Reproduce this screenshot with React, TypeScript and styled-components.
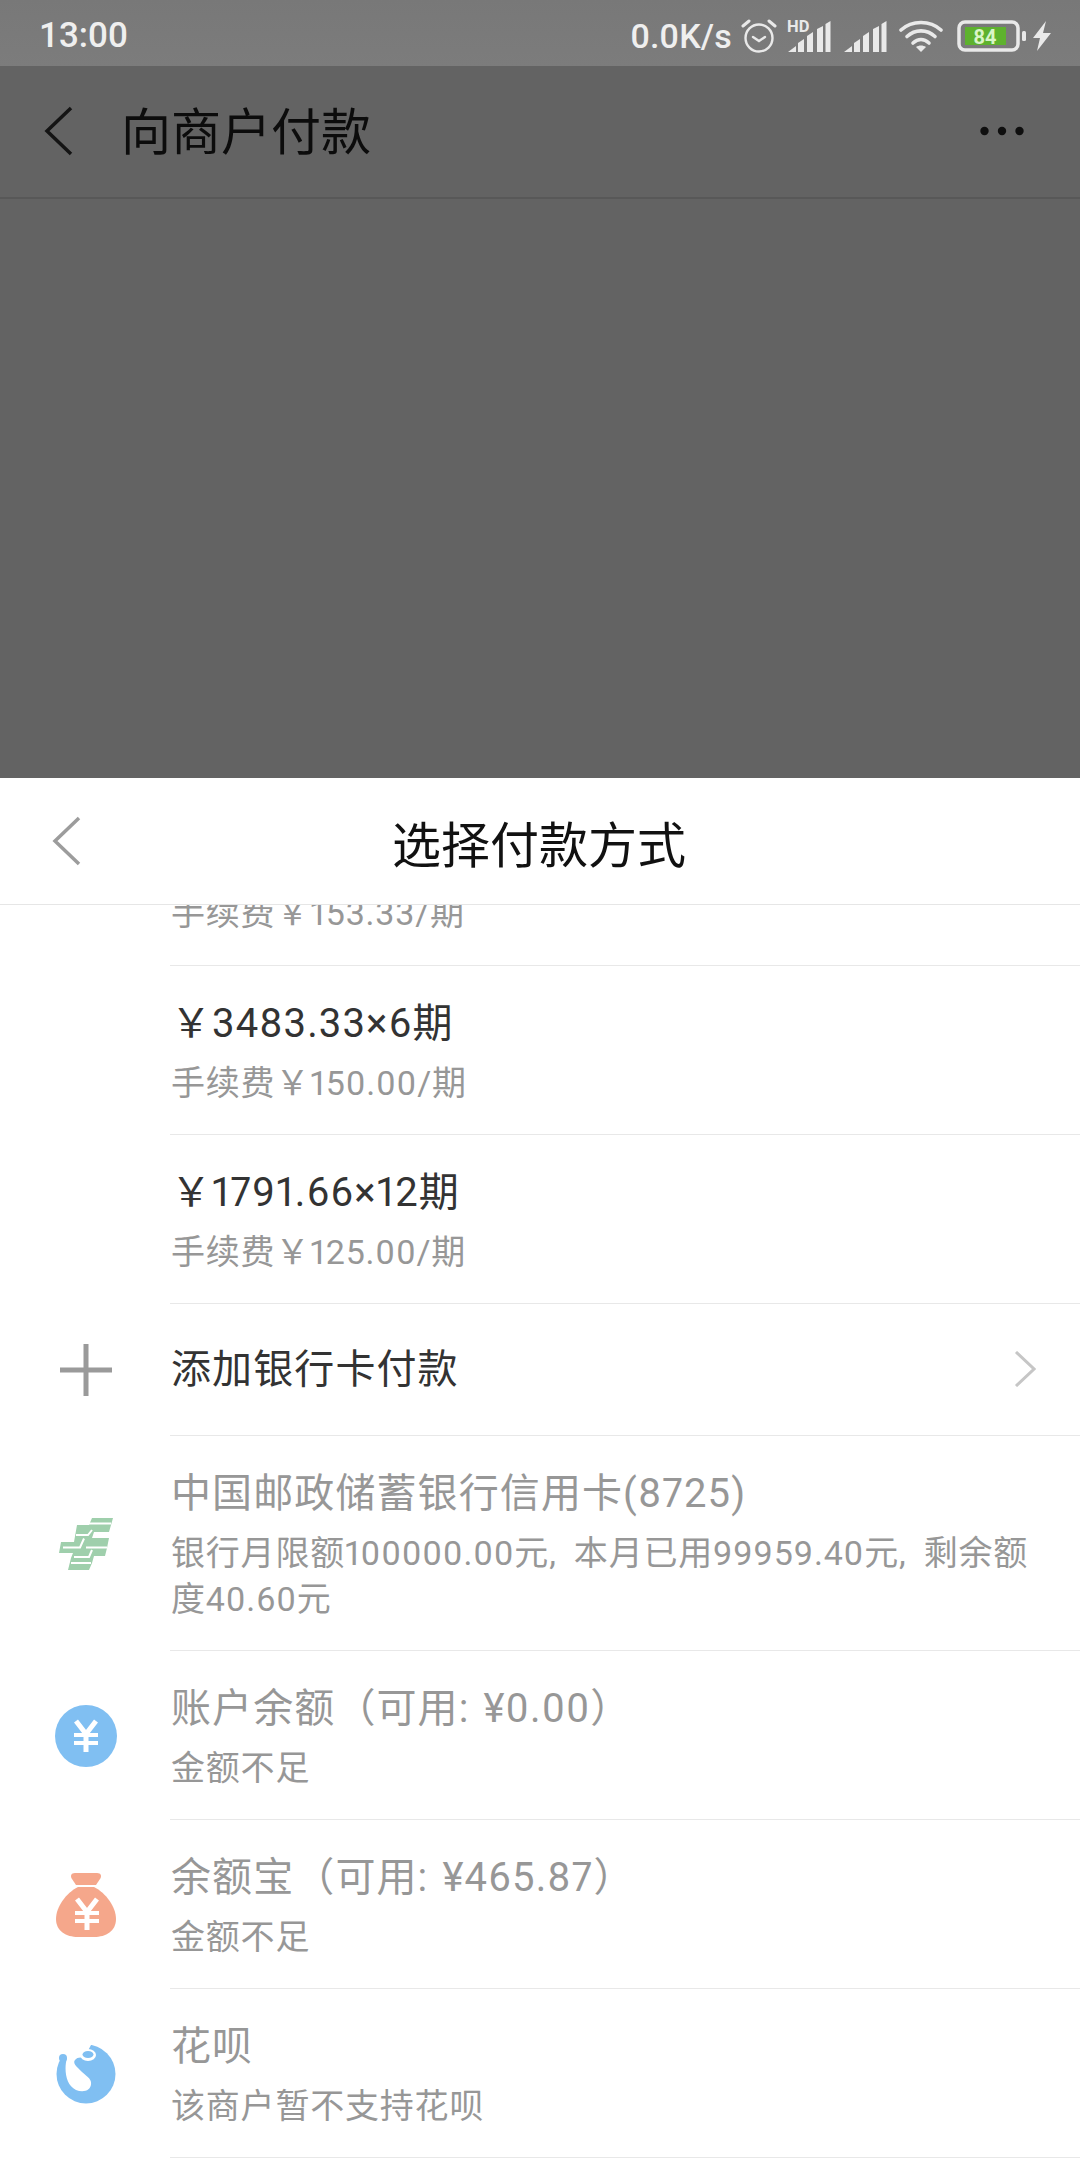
import React from "react";
import { createGlobalStyle, styled } from "styled-components";

const GlobalStyle = createGlobalStyle`
  html, body {
    margin: 0;
    padding: 0;
    background: #fff;
  }
  * {
    box-sizing: border-box;
  }
`;

const FONT = `Roboto, "Noto Sans CJK SC", "Noto Sans", sans-serif`;

const Page = styled.div`
  width: 1080px;
  height: 2160px;
  display: flex;
  flex-direction: column;
  overflow: hidden;
  font-family: ${FONT};
`;
const StatusBar = styled.div`
  height: 66px;
  flex: none;
  background: linear-gradient(#787878, #7c7c7c);
  display: flex;
  align-items: center;
  justify-content: space-between;
  padding: 5px 28px 0 39px;
  color: #efefef;
  font-weight: 500;
`;
const Clock = styled.span`
  font-size: 35px;
`;
const StatusIcons = styled.div`
  display: flex;
  align-items: center;
`;
const Speed = styled.span`
  font-size: 34px;
  letter-spacing: 0.2px;
`;
const Gap = styled.span<{ $w: number }>`
  width: ${(p) => p.$w}px;
  flex: none;
`;
const AppBar = styled.div`
  height: 133px;
  flex: none;
  background: #636363;
  border-bottom: 2px solid #585858;
  display: flex;
  align-items: center;
  padding: 0 56px 2px 44px;
`;
const AppTitle = styled.div`
  font-size: 50px;
  color: #0c0c0c;
  margin-left: 47px;
  padding-bottom: 6px;
  flex: 1;
`;
const Dimmed = styled.div`
  flex: none;
  height: 579px;
  background: #636363;
`;
const Sheet = styled.div`
  flex: 1;
  min-height: 0;
  background: #fff;
  display: flex;
  flex-direction: column;
`;
const SheetHeader = styled.div`
  height: 127px;
  flex: none;
  border-bottom: 1px solid #e6e6e6;
  display: grid;
  grid-template-columns: 1fr auto 1fr;
  align-items: center;
`;
const BackSlot = styled.div`
  display: flex;
  padding-left: 52px;
`;
const SheetTitle = styled.div`
  font-size: 49px;
  color: #111;
  margin-left: -2px;
`;
const List = styled.div`
  flex: 1;
  min-height: 0;
  overflow: hidden;
`;
const Row = styled.div`
  display: flex;
`;
const IconSlot = styled.div`
  width: 170px;
  flex: none;
  display: flex;
  align-items: center;
  justify-content: center;
  padding-left: 2px;
`;
const Body = styled.div<{ $variant?: "compact" | "clipped" }>`
  flex: 1;
  min-width: 0;
  border-bottom: 1px solid #e8e8e8;
  padding: ${(p) =>
    p.$variant === "compact"
      ? "39px 44px 38px 1px"
      : p.$variant === "clipped"
        ? "0 44px 29px 1px"
        : "31px 44px 28px 1px"};
  display: flex;
  flex-direction: column;
  position: relative;
`;
const Title = styled.div<{ $muted?: boolean }>`
  font-size: 40px;
  line-height: 54px;
  white-space: nowrap;
  color: ${(p) => (p.$muted ? "#979797" : "#333")};
  letter-spacing: 1.1px;
  word-spacing: 3px;
  font-variant-numeric: proportional-nums;
`;
const Sub = styled.div<{ $clipped?: boolean }>`
  margin-top: ${(p) => (p.$clipped ? "-15px" : "9px")};
  font-size: 34px;
  line-height: 46px;
  color: #979797;
  letter-spacing: 0.8px;
  word-spacing: 8px;
  font-variant-numeric: proportional-nums;
`;
const Arrow = styled.svg`
  position: absolute;
  right: 44px;
  top: 47px;
`;

const Alarm = () => (
  <svg width="36" height="36" viewBox="0 0 36 36" fill="none" stroke="#e9e9e9" strokeWidth="2.4" strokeLinecap="round">
    <circle cx="18" cy="20" r="13.5" />
    <path d="M12 19l6 4 6-4" />
    <path d="M2 8l6-5M34 8l-6-5" strokeWidth="3" />
  </svg>
);
const Signal = ({ hd }: { hd?: boolean }) => (
  <svg width="44" height="34" viewBox="0 0 44 34" fill="#e9e9e9">
    <path d="M1 33l8-6v6zM11 33v-9l6-4v13zM20 33V17l6-4v20zM30 33V10l6-3v26zM38.500 33V5l5-3v31z" />
    {hd && (
      <text x="0" y="13" fontSize="16.500" fontWeight="700" fontFamily="Roboto, sans-serif">
        HD
      </text>
    )}
  </svg>
);
const Wifi = () => (
  <svg width="44" height="34" viewBox="0 0 44 34" fill="none" stroke="#e9e9e9" strokeWidth="3.600" strokeLinecap="round">
    <path d="M2 11C13 1 31 1 42 11" />
    <path d="M8 17.500C16 10 28 10 36 17.500" />
    <path d="M14 24C19 19.500 25 19.500 30 24" />
    <path d="M22 33l-5-5c3-2 7-2 10 0z" fill="#e9e9e9" stroke="none" />
  </svg>
);
const Battery = () => (
  <svg width="70" height="34" viewBox="0 0 70 34">
    <rect x="2" y="3" width="59" height="28" rx="6" fill="none" stroke="#e9e9e9" strokeWidth="3.500" />
    <rect x="8" y="8" width="41" height="18" fill="#5eb22e" />
    <rect x="65" y="12" width="4" height="10" rx="1.500" fill="#e9e9e9" />
    <text x="28" y="24.500" textAnchor="middle" fontSize="20" fontWeight="700" fill="#d9f5c8" fontFamily="Roboto, sans-serif">
      84
    </text>
  </svg>
);
const Bolt = () => (
  <svg width="20" height="30" viewBox="0 0 20 30" fill="#e9e9e9">
    <path d="M14 0L1 17h7l-3 13 14-18h-8z" />
  </svg>
);
const Back = ({ color }: { color: string }) => (
  <svg width="30" height="50" viewBox="0 0 30 50" fill="none" stroke={color} strokeWidth="3.500">
    <path d="M27 2L3 25l24 23" />
  </svg>
);
const Dots = () => (
  <svg width="44" height="10" viewBox="0 0 44 10" fill="#0f0f0f">
    <circle cx="4.500" cy="5" r="4.200" />
    <circle cx="22" cy="5" r="4.200" />
    <circle cx="39.500" cy="5" r="4.200" />
  </svg>
);
const Plus = () => (
  <svg width="52" height="52" viewBox="0 0 52 52" fill="#9a9a9a">
    <path d="M23.500 0h5v23.500H52v5H28.500V52h-5V28.500H0v-5h23.500z" />
  </svg>
);
const PostLogo = () => (
  <svg width="54" height="52" viewBox="0 0 54 52">
    <path
      d="M54 0H33l-3 7H18l-3 17H2L0 35h14l-2 5-3 12h21l3-7 2-7h11l2-8 2-10H33l2-6h15l2-7z"
      fill="#9fcfac"
    />
    <path
      d="M30 5.500h22M17 17h12l4-5M4 29.500h17l4-9M27 29.500h21M12 45h20M15 39h15l3-7"
      fill="none"
      stroke="#fff"
      strokeWidth="2"
    />
  </svg>
);
const YenMark = ({ x, y }: { x: number; y: number }) => (
  <path
    transform={`translate(${x} ${y})`}
    d="M-10 -15l10 13 10 -13"
    fill="none"
    stroke="#fff"
    strokeWidth="5"
  />
);
const YenBars = ({ x, y }: { x: number; y: number }) => (
  <path
    transform={`translate(${x} ${y})`}
    d="M-12 -1h24v4h-24zM-12 7h24v4h-24zM-2.500 -2h5v20h-5z"
    fill="#fff"
  />
);
const Balance = () => (
  <svg width="62" height="62" viewBox="0 0 62 62">
    <circle cx="31" cy="31" r="31" fill="#80bff2" />
    <YenMark x={31} y={31} />
    <YenBars x={31} y={29} />
  </svg>
);
const MoneyBag = () => (
  <svg width="60" height="64" viewBox="0 0 60 64">
    <path d="M19 0h22c4 0 5 3 3 6l-4 6H20l-4-6c-2-3-1-6 3-6z" fill="#f5a78b" />
    <path d="M22 14h16c12 6 22 20 22 32 0 12-10 18-22 18H22C10 64 0 58 0 46c0-12 10-26 22-32z" fill="#f5a78b" />
    <YenMark x={31} y={41} />
    <YenBars x={31} y={39} />
  </svg>
);
const Huabei = () => (
  <svg width="60" height="60" viewBox="0 0 60 60">
    <circle cx="30" cy="30" r="29.500" fill="#80bff2" />
    <path
      d="M11 14C8 24 9 41 20 46c7 3 16 1 15-8-1-5-8-8-13-14-3-3-5-6-3-8 2-3 6-3 9-2L35 1V-5H0v19z"
      fill="#fff"
    />
    <circle cx="7" cy="14" r="4" fill="#80bff2" />
    <ellipse cx="32" cy="11" rx="8" ry="6" fill="#fff" />
    <ellipse cx="32" cy="10.500" rx="5.500" ry="3.500" fill="#80bff2" />
  </svg>
);

const plans = [
  { title: "￥3483.33×6期", fee: "手续费￥150.00/期" },
  { title: "￥1791.66×12期", fee: "手续费￥125.00/期" },
];

const methods = [
  {
    icon: <PostLogo />,
    title: "中国邮政储蓄银行信用卡(8725)",
    sub: "银行月限额100000.00元, 本月已用99959.40元, 剩余额度40.60元",
  },
  { icon: <Balance />, title: "账户余额（可用: ¥0.00）", sub: "金额不足" },
  { icon: <MoneyBag />, title: "余额宝（可用: ¥465.87）", sub: "金额不足" },
  { icon: <Huabei />, title: "花呗", sub: "该商户暂不支持花呗" },
];

export default function App() {
  return (
    <Page>
      <GlobalStyle />
      <StatusBar>
        <Clock>13:00</Clock>
        <StatusIcons>
          <Speed>0.0K/s</Speed>
          <Gap $w={9} />
          <Alarm />
          <Gap $w={10} />
          <Signal hd />
          <Gap $w={12} />
          <Signal />
          <Gap $w={12} />
          <Wifi />
          <Gap $w={14} />
          <Battery />
          <Gap $w={5} />
          <Bolt />
        </StatusIcons>
      </StatusBar>
      <AppBar>
        <Back color="#141414" />
        <AppTitle>向商户付款</AppTitle>
        <Dots />
      </AppBar>
      <Dimmed />
      <Sheet>
        <SheetHeader>
          <BackSlot>
            <Back color="#9c9c9c" />
          </BackSlot>
          <SheetTitle>选择付款方式</SheetTitle>
        </SheetHeader>
        <List>
          <Row>
            <IconSlot />
            <Body $variant="clipped">
              <Sub $clipped>手续费￥153.33/期</Sub>
            </Body>
          </Row>
          {plans.map((plan) => (
            <Row key={plan.title}>
              <IconSlot />
              <Body>
                <Title>{plan.title}</Title>
                <Sub>{plan.fee}</Sub>
              </Body>
            </Row>
          ))}
          <Row>
            <IconSlot>
              <Plus />
            </IconSlot>
            <Body $variant="compact">
              <Title>添加银行卡付款</Title>
              <Arrow width="22" height="36" viewBox="0 0 22 36" fill="none" stroke="#c6c6c6" strokeWidth="3">
                <path d="M2 1l18 17L2 35" />
              </Arrow>
            </Body>
          </Row>
          {methods.map((m) => (
            <Row key={m.title}>
              <IconSlot>{m.icon}</IconSlot>
              <Body>
                <Title $muted>{m.title}</Title>
                <Sub>{m.sub}</Sub>
              </Body>
            </Row>
          ))}
        </List>
      </Sheet>
    </Page>
  );
}
